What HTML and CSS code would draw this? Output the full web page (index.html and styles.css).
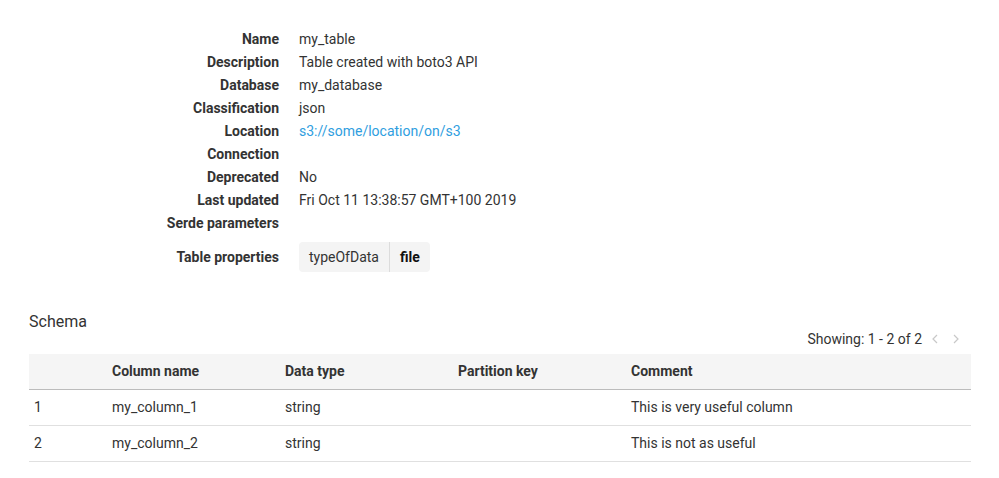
FILE: index.html
```html
<!DOCTYPE html>
<html>
<head>
<meta charset="utf-8">
<link rel="stylesheet" href="styles.css">
</head>
<body>
<div class="page">
  <dl class="details">
    <dt>Name</dt><dd>my_table</dd>
    <dt>Description</dt><dd>Table created with boto3 API</dd>
    <dt>Database</dt><dd>my_database</dd>
    <dt>Classification</dt><dd>json</dd>
    <dt>Location</dt><dd><a class="link" href="#">s3://some/location/on/s3</a></dd>
    <dt>Connection</dt><dd></dd>
    <dt>Deprecated</dt><dd>No</dd>
    <dt>Last updated</dt><dd>Fri Oct 11 13:38:57 GMT+100 2019</dd>
    <dt>Serde parameters</dt><dd></dd>
    <dt class="props-label">Table properties</dt>
    <dd class="props-value">
      <span class="pill"><span class="pill-key">typeOfData</span><span class="pill-val">file</span></span>
    </dd>
  </dl>

  <section class="schema">
    <h2 class="schema-title">Schema</h2>
    <div class="pager">
      <span class="pager-text">Showing: 1 - 2 of 2</span>
      <span class="pager-btn"><svg width="6" height="10" viewBox="0 0 6 10"><path d="M5 1 L1 5 L5 9" fill="none" stroke="#c8c8c8" stroke-width="1.2"/></svg></span>
      <span class="pager-btn"><svg width="6" height="10" viewBox="0 0 6 10"><path d="M1 1 L5 5 L1 9" fill="none" stroke="#c8c8c8" stroke-width="1.2"/></svg></span>
    </div>
    <table class="grid">
      <colgroup>
        <col class="c-idx"><col class="c-mid"><col class="c-mid"><col class="c-mid"><col>
      </colgroup>
      <thead>
        <tr><th></th><th>Column name</th><th>Data type</th><th>Partition key</th><th>Comment</th></tr>
      </thead>
      <tbody>
        <tr><td>1</td><td>my_column_1</td><td>string</td><td></td><td>This is very useful column</td></tr>
        <tr><td>2</td><td>my_column_2</td><td>string</td><td></td><td>This is not as useful</td></tr>
      </tbody>
    </table>
  </section>
</div>
</body>
</html>
```
FILE: styles.css
```css
* { box-sizing: border-box; }
html, body { margin: 0; background: #fff; }
body {
  font-family: Roboto, "Noto Sans", sans-serif;
  font-size: 14px;
  color: #333;
}
.page { padding: 28px 28px 0 29px; }

.details {
  display: grid;
  grid-template-columns: 250px 1fr;
  column-gap: 20px;
  margin: 0;
  line-height: 23px;
}
.details dt {
  font-weight: 700;
  text-align: right;
  margin: 0;
}
.details dd { margin: 0; min-height: 23px; }
.link { color: #2f9ee0; text-decoration: none; }

.props-label { margin-top: 7px !important; line-height: 30px; }
.props-value { margin-top: 7px !important; }
.pill {
  display: inline-flex;
  height: 30px;
  align-items: stretch;
  background: #f4f4f4;
  border-radius: 4px;
  line-height: 30px;
}
.pill-key { padding: 0 10px; border-right: 1px solid #dcdcdc; }
.pill-val { padding: 0 10px; font-weight: 700; color: #111; }

.schema { margin-top: 40px; }
.schema-title {
  font-size: 16px;
  font-weight: 400;
  margin: 0;
  line-height: 20px;
}
.pager {
  display: flex;
  justify-content: flex-end;
  align-items: center;
  height: 22px;
  margin-right: 5px;
  margin-top: -4px;
}
.pager-text { margin-right: 2px; }
.pager-btn { width: 21px; display: flex; justify-content: center; }

.grid {
  width: 942px;
  border-collapse: collapse;
  margin-top: 4px;
  table-layout: fixed;
}
.c-idx { width: 78px; }
.c-mid { width: 173px; }
.grid th {
  background: #f5f5f5;
  font-weight: 700;
  text-align: left;
  height: 35px;
  padding: 0 5px;
  border-bottom: 1px solid #bcbcbc;
}
.grid td {
  height: 36px;
  padding: 0 5px;
  border-bottom: 1px solid #e0e0e0;
}
```
